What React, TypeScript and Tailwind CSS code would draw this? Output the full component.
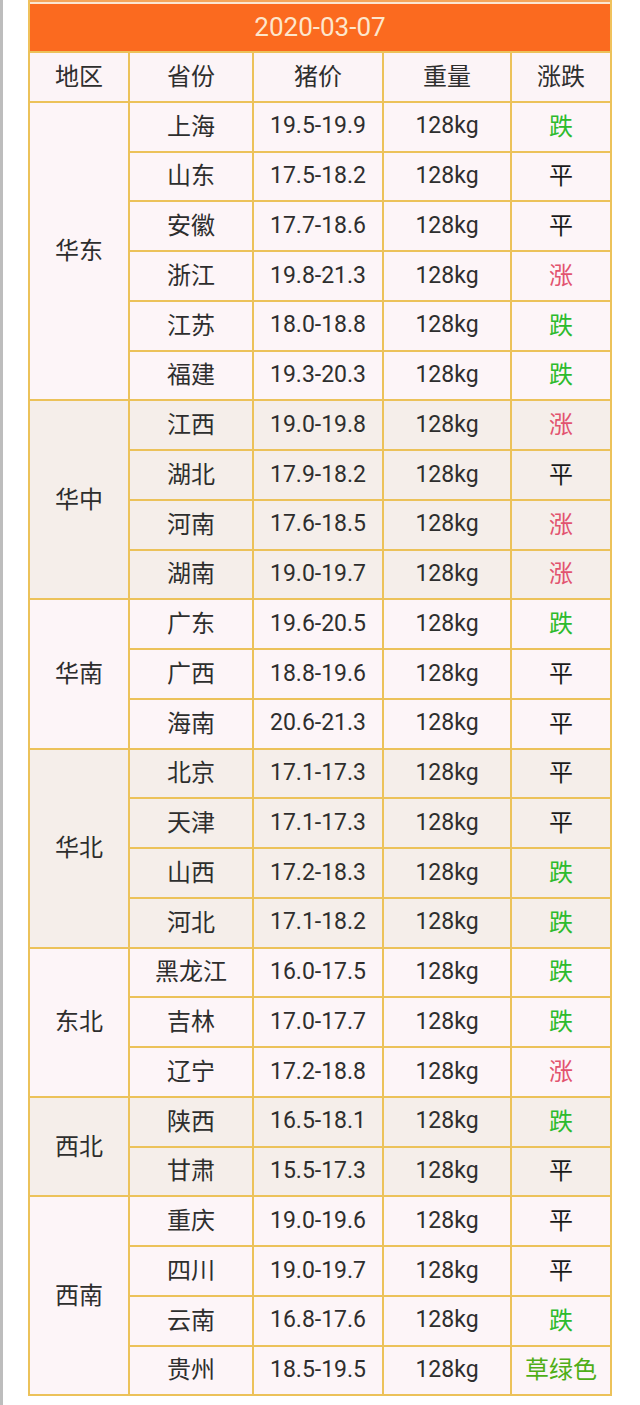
const FONT = "font-['Roboto','Noto_Sans_CJK_SC',sans-serif]";

type Trend = "跌" | "涨" | "平" | "草绿色";

interface Row {
  province: string;
  price: string;
  trend: Trend;
}

interface Group {
  region: string;
  shaded: boolean;
  rows: Row[];
}

const groups: Group[] = [
  {
    region: "华东",
    shaded: false,
    rows: [
      { province: "上海", price: "19.5-19.9", trend: "跌" },
      { province: "山东", price: "17.5-18.2", trend: "平" },
      { province: "安徽", price: "17.7-18.6", trend: "平" },
      { province: "浙江", price: "19.8-21.3", trend: "涨" },
      { province: "江苏", price: "18.0-18.8", trend: "跌" },
      { province: "福建", price: "19.3-20.3", trend: "跌" },
    ],
  },
  {
    region: "华中",
    shaded: true,
    rows: [
      { province: "江西", price: "19.0-19.8", trend: "涨" },
      { province: "湖北", price: "17.9-18.2", trend: "平" },
      { province: "河南", price: "17.6-18.5", trend: "涨" },
      { province: "湖南", price: "19.0-19.7", trend: "涨" },
    ],
  },
  {
    region: "华南",
    shaded: false,
    rows: [
      { province: "广东", price: "19.6-20.5", trend: "跌" },
      { province: "广西", price: "18.8-19.6", trend: "平" },
      { province: "海南", price: "20.6-21.3", trend: "平" },
    ],
  },
  {
    region: "华北",
    shaded: true,
    rows: [
      { province: "北京", price: "17.1-17.3", trend: "平" },
      { province: "天津", price: "17.1-17.3", trend: "平" },
      { province: "山西", price: "17.2-18.3", trend: "跌" },
      { province: "河北", price: "17.1-18.2", trend: "跌" },
    ],
  },
  {
    region: "东北",
    shaded: false,
    rows: [
      { province: "黑龙江", price: "16.0-17.5", trend: "跌" },
      { province: "吉林", price: "17.0-17.7", trend: "跌" },
      { province: "辽宁", price: "17.2-18.8", trend: "涨" },
    ],
  },
  {
    region: "西北",
    shaded: true,
    rows: [
      { province: "陕西", price: "16.5-18.1", trend: "跌" },
      { province: "甘肃", price: "15.5-17.3", trend: "平" },
    ],
  },
  {
    region: "西南",
    shaded: false,
    rows: [
      { province: "重庆", price: "19.0-19.6", trend: "平" },
      { province: "四川", price: "19.0-19.7", trend: "平" },
      { province: "云南", price: "16.8-17.6", trend: "跌" },
      { province: "贵州", price: "18.5-19.5", trend: "草绿色" },
    ],
  },
];

const spanClass: Record<number, string> = {
  2: "row-span-2",
  3: "row-span-3",
  4: "row-span-4",
  6: "row-span-6",
};

function trendColor(t: Trend) {
  if (t === "跌") return "text-[#2dbb2d]";
  if (t === "涨") return "text-[#e2536f]";
  if (t === "草绿色") return "text-[#4fae17]";
  return "text-[#1a1a1a]";
}

function Cell({ children, className = "" }: { children: React.ReactNode; className?: string }) {
  return (
    <div className={`flex items-center justify-center text-[#2e2e2e] ${className}`}>
      {children}
    </div>
  );
}

export default function App() {
  return (
    <div className={`min-h-[1405px] w-[640px] bg-white border-l-[3px] border-[#bdbdbd] ${FONT}`}>
      <div className="ml-[25px] w-[584px]">
        {/* Date banner */}
        <div className="border-x-2 border-[#f0c25c]">
          <div className="h-[2px] bg-[#f4a45a]" />
          <div className="h-[2px] bg-[#fbe6d2]" />
          <div className="h-[47px] bg-[#fb6a1f] flex items-center justify-center text-[26px] text-[#fde6cc]">
            2020-03-07
          </div>
        </div>

        {/* Price table */}
        <div className="grid grid-cols-[98px_122px_128px_126px_98px] auto-rows-[47.75px] gap-[2px] p-[2px] bg-[#ecc25a]">
          {["地区", "省份", "猪价", "重量", "涨跌"].map((h) => (
            <Cell key={h} className="bg-[#fcf4f7] text-[24px]">
              {h}
            </Cell>
          ))}

          {groups.map((g) => {
            const bg = g.shaded ? "bg-[#f5eeea]" : "bg-[#fdf5f8]";
            return [
              <Cell key={g.region} className={`${bg} ${spanClass[g.rows.length]} text-[24px]`}>
                {g.region}
              </Cell>,
              ...g.rows.flatMap((r) => [
                <Cell key={`${r.province}-p`} className={`${bg} text-[24px]`}>
                  {r.province}
                </Cell>,
                <Cell key={`${r.province}-c`} className={`${bg} text-[23px]`}>
                  {r.price}
                </Cell>,
                <Cell key={`${r.province}-w`} className={`${bg} text-[23px]`}>
                  128kg
                </Cell>,
                <div
                  key={`${r.province}-t`}
                  className={`${bg} flex items-center justify-center text-[24px] ${trendColor(r.trend)}`}
                >
                  {r.trend}
                </div>,
              ]),
            ];
          })}
        </div>
      </div>
    </div>
  );
}
